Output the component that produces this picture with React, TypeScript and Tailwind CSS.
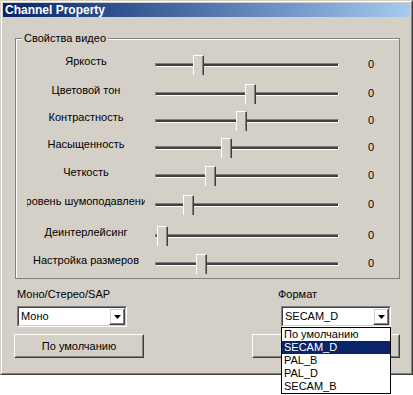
import type { ReactNode } from 'react';

const sliders = [
  { label: 'Яркость', pos: 38, h: 'h-[29px]' },
  { label: 'Цветовой тон', pos: 90, h: 'h-[27px]' },
  { label: 'Контрастность', pos: 81, h: 'h-[27px]' },
  { label: 'Насыщенность', pos: 66, h: 'h-[28px]' },
  { label: 'Четкость', pos: 50, h: 'h-[29px]' },
  { label: 'Уровень шумоподавления', pos: 28, h: 'h-[31px]' },
  { label: 'Деинтерлейсинг', pos: 2, h: 'h-[28px]' },
  { label: 'Настройка размеров', pos: 41, h: 'h-[20px]' },
];

const formats = ['По умолчанию', 'SECAM_D', 'PAL_B', 'PAL_D', 'SECAM_B'];

function Raised({ className = '', children }: { className?: string; children?: ReactNode }) {
  return (
    <div className={`border border-t-white border-l-white border-r-[#404040] border-b-[#404040] ${className}`}>
      <div className="w-full h-full border border-t-[#d4d0c8] border-l-[#d4d0c8] border-r-[#808080] border-b-[#808080] flex items-center justify-center">
        {children}
      </div>
    </div>
  );
}

function Combo({ value, className = '' }: { value: string; className?: string }) {
  return (
    <div className={`h-[21px] border border-t-[#808080] border-l-[#808080] border-r-white border-b-white ${className}`}>
      <div className="h-full border border-t-[#404040] border-l-[#404040] border-r-[#d4d0c8] border-b-[#d4d0c8] bg-white flex">
        <div className="flex-1 pl-[2px] leading-[17px]">{value}</div>
        <Raised className="w-[16px] h-[17px]">
          <svg width="7" height="4" viewBox="0 0 7 4">
            <polygon points="0,0 7,0 3.5,4" fill="#000" />
          </svg>
        </Raised>
      </div>
    </div>
  );
}

function Slider({ pos }: { pos: number }) {
  return (
    <div className="relative w-[184px] h-[20px] pt-[8px]">
      <div className="h-[4px] bg-[#404040] border border-t-[#808080] border-l-[#808080] border-r-white border-b-white" />
      <div
        className="absolute top-0 w-[11px] h-[20px] bg-[#d4d0c8] border-t border-l border-r border-t-white border-l-white border-r-[#404040] shadow-[inset_-1px_0_0_#808080]"
        style={{ left: pos }}
      />
    </div>
  );
}

export default function App() {
  return (
    <div className="w-[413px] h-[395px] bg-white font-['Liberation_Sans',Arial,sans-serif] text-[11px] text-black">
      <div className="w-[413px] h-[375px] border border-t-[#d4d0c8] border-l-[#d4d0c8] border-r-[#404040] border-b-[#404040]">
        <div className="h-full border border-t-white border-l-white border-r-[#808080] border-b-[#808080] bg-[#d4d0c8] p-[1px]">
          {/* Title bar */}
          <div className="h-[14px] bg-gradient-to-r from-[#0a246a] to-[#a6caf0] flex items-center pl-[2px]">
            <span className="text-white font-bold text-[12px] leading-[14px]">Channel Property</span>
          </div>

          {/* Video properties group */}
          <div className="relative ml-[12px] mt-[21px] w-[385px] h-[241px] border border-[#808080] shadow-[inset_1px_1px_0_#fff] pt-[16px] pl-[11px]">
            <span className="absolute -top-[7px] left-[6px] px-[2px] bg-[#d4d0c8] leading-[13px]">Свойства видео</span>
            {sliders.map((s) => (
              <div key={s.label} className={`flex items-start ${s.h}`}>
                <div className="w-[118px] flex justify-center overflow-hidden whitespace-nowrap leading-[13px]">
                  <span className="shrink-0">{s.label}</span>
                </div>
                <div className="ml-[10px]">
                  <Slider pos={s.pos} />
                </div>
                <div className="ml-[29px] mt-[3px] leading-[13px]">0</div>
              </div>
            ))}
          </div>

          {/* Bottom controls */}
          <div className="flex mt-[9px]">
            <div className="ml-[11px] w-[130px]">
              <div className="ml-[3px] leading-[13px]">Моно/Стерео/SAP</div>
              <Combo value="Моно" className="ml-[3px] mt-[5px] w-[110px]" />
              <Raised className="mt-[7px] w-[130px] h-[24px]">По умолчанию</Raised>
            </div>
            <div className="relative ml-[108px] w-[148px]">
              <div className="ml-[26px] leading-[13px]">Формат</div>
              <Combo value="SECAM_D" className="ml-[29px] mt-[5px] w-[110px]" />
              <Raised className="mt-[7px] w-[148px] h-[24px]" />
              <div className="absolute left-[29px] top-[39px] w-[110px] border border-black bg-white">
                {formats.map((f, i) => (
                  <div
                    key={f}
                    className={`h-[13px] leading-[13px] pl-[2px] ${i === 1 ? 'bg-[#0a246a] text-white' : ''}`}
                  >
                    {f}
                  </div>
                ))}
              </div>
            </div>
          </div>
        </div>
      </div>
    </div>
  );
}
